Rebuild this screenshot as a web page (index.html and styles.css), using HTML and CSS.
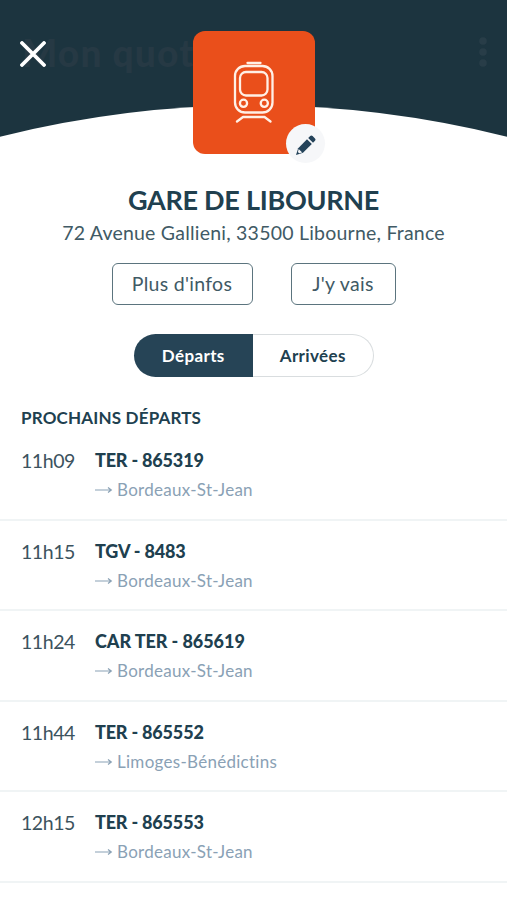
FILE: index.html
```html
<!DOCTYPE html>
<html lang="fr">
<head>
<meta charset="utf-8">
<title>Gare de Libourne</title>
<link rel="stylesheet" href="styles.css">
</head>
<body>
<main class="screen">
  <header class="hero">
    <div class="backdrop">
      <span class="backdrop-title">Mon quot</span>
      <svg class="dots" width="10" height="32" viewBox="0 0 10 32"><circle cx="5" cy="5" r="3.8"/><circle cx="5" cy="16" r="3.8"/><circle cx="5" cy="27" r="3.8"/></svg>
    </div>
    <svg class="curve" width="507" height="34" viewBox="0 0 507 34" preserveAspectRatio="none"><path d="M0 33.7Q253.5 -29 507 33.7V34H0Z"/></svg>
    <svg class="close" width="26" height="26" viewBox="0 0 26 26"><path d="M2 2L24 24M24 2L2 24"/></svg>
    <div class="tile">
      <svg class="train" width="42" height="64" viewBox="0 0 42 64">
        <path d="M14.5 2H27.5"/>
        <rect x="2" y="5" width="37.5" height="46.5" rx="10"/>
        <rect x="7" y="11" width="27.5" height="23.5" rx="6"/>
        <circle cx="10.5" cy="42.3" r="3.6"/>
        <circle cx="31.3" cy="42.3" r="3.6"/>
        <path d="M4 60.5L10 56H31.5L37.5 60.5"/>
      </svg>
      <span class="edit">
        <svg width="22" height="22" viewBox="0 0 22 22"><path d="M1 21L3.2 14.2L12 5.3L16.8 10L8 18.8Z"/><path d="M13.2 4.1L15.2 2Q16.4 .8 17.6 2L20 4.4Q21.2 5.6 20 6.8L18 8.8Z"/><path class="tip" d="M3.7 15L7.2 18.4L4.1 19.3L2.9 18.1Z"/></svg>
      </span>
    </div>
  </header>
  <section class="place">
    <h1>GARE DE LIBOURNE</h1>
    <p class="address">72 Avenue Gallieni, 33500 Libourne, France</p>
    <div class="actions">
      <button class="info">Plus d'infos</button>
      <button class="go">J'y vais</button>
    </div>
    <div class="tabs"><button class="tab active">Départs</button><button class="tab">Arrivées</button></div>
  </section>
  <section class="board">
    <h2>PROCHAINS DÉPARTS</h2>
    <ul>
      <li><time>11h09</time><div><strong>TER - 865319</strong><p><svg class="arrow" width="18" height="8" viewBox="0 0 18 8"><path d="M0 4H16M13 1.5L16.3 4L13 6.5"/></svg><span>Bordeaux-St-Jean</span></p></div></li>
      <li><time>11h15</time><div><strong>TGV - 8483</strong><p><svg class="arrow" width="18" height="8" viewBox="0 0 18 8"><path d="M0 4H16M13 1.5L16.3 4L13 6.5"/></svg><span>Bordeaux-St-Jean</span></p></div></li>
      <li><time>11h24</time><div><strong class="wide">CAR TER - 865619</strong><p><svg class="arrow" width="18" height="8" viewBox="0 0 18 8"><path d="M0 4H16M13 1.5L16.3 4L13 6.5"/></svg><span>Bordeaux-St-Jean</span></p></div></li>
      <li><time>11h44</time><div><strong>TER - 865552</strong><p><svg class="arrow" width="18" height="8" viewBox="0 0 18 8"><path d="M0 4H16M13 1.5L16.3 4L13 6.5"/></svg><span>Limoges-Bénédictins</span></p></div></li>
      <li><time>12h15</time><div><strong>TER - 865553</strong><p><svg class="arrow" width="18" height="8" viewBox="0 0 18 8"><path d="M0 4H16M13 1.5L16.3 4L13 6.5"/></svg><span>Bordeaux-St-Jean</span></p></div></li>
    </ul>
  </section>
</main>
</body>
</html>
```
FILE: styles.css
```css
* { box-sizing: border-box; margin: 0; padding: 0; }
body { font-family: Lato, "Open Sans", sans-serif; color: #20404f; background: #fff; }
.screen { width: 507px; height: 900px; overflow: hidden; background: #fff; }

.hero { position: relative; height: 137px; background: #1c343f; display: flex; justify-content: center; padding-top: 31px; }
.backdrop { position: absolute; left: 22px; right: 19px; top: 36px; display: flex; justify-content: space-between; }
.backdrop-title { font-size: 37px; line-height: 33px; font-weight: 900; letter-spacing: 1.2px; color: #263944; }
.dots { fill: #283d48; }
.curve { position: absolute; left: 0; bottom: 0; fill: #fff; }
.close { position: absolute; left: 20px; top: 41px; fill: none; stroke: #fff; stroke-width: 3.8; stroke-linecap: round; }
.tile { position: relative; width: 122px; height: 123px; border-radius: 12px; background: #ea4f1b; padding: 30px 0 0 40px; }
.train { display: block; fill: none; stroke: #fff0e6; stroke-width: 2.3; stroke-linecap: round; stroke-linejoin: round; }
.edit { position: absolute; right: -10px; bottom: -9px; width: 39px; height: 39px; border-radius: 50%; background: #f6f7f9; display: flex; align-items: center; justify-content: center; padding: 2px 0 0 2px; }
.edit svg { fill: #24435a; }
.edit .tip { fill: #f6f7f9; }

.place { display: flex; flex-direction: column; align-items: center; padding-top: 46px; }
h1 { font-size: 27px; line-height: 34px; font-weight: 700; letter-spacing: -.27px; white-space: nowrap; }
.address { margin-top: 1px; font-size: 19.5px; line-height: 29px; letter-spacing: .22px; color: #415a65; white-space: nowrap; }
.actions { display: flex; gap: 38px; margin-top: 16px; }
button { font: inherit; color: inherit; background: none; border: 0; white-space: nowrap; }
.actions button { height: 42px; border: 1.5px solid #5b747e; border-radius: 6px; font-size: 19.5px; letter-spacing: .3px; color: #415a65; padding-bottom: 2px; }
.info { width: 141px; }
.go { width: 105px; }
.tabs { display: flex; width: 240px; height: 43px; margin-top: 29px; }
.tab { flex: 1; font-size: 17px; font-weight: 700; letter-spacing: .35px; border: 1px solid #d9dddf; border-left: 0; border-radius: 0 22px 22px 0; }
.tab.active { background: #264456; color: #fff; border: 0; border-radius: 22px 0 0 22px; }

.board { padding-top: 29px; }
h2 { font-size: 17px; line-height: 24px; font-weight: 700; padding-left: 21px; letter-spacing: .18px; }
ul { list-style: none; }
li { display: flex; height: 90.5px; padding: 18px 0 0 21px; border-bottom: 2px solid #f0f4f5; }
time { width: 74px; padding-top: 1px; font-size: 19.5px; line-height: 24px; letter-spacing: -.45px; color: #3c535e; }
strong { display: block; font-size: 18px; line-height: 24px; font-weight: 900; letter-spacing: -.18px; white-space: nowrap; color: #20404f; }
strong.wide { letter-spacing: -.06px; }
li p { display: flex; align-items: center; gap: 4px; margin-top: 6px; font-size: 17px; line-height: 24px; letter-spacing: .28px; color: #8aa1b5; white-space: nowrap; }
.arrow { fill: none; stroke: #8aa1b5; stroke-width: 1.2; }
```
